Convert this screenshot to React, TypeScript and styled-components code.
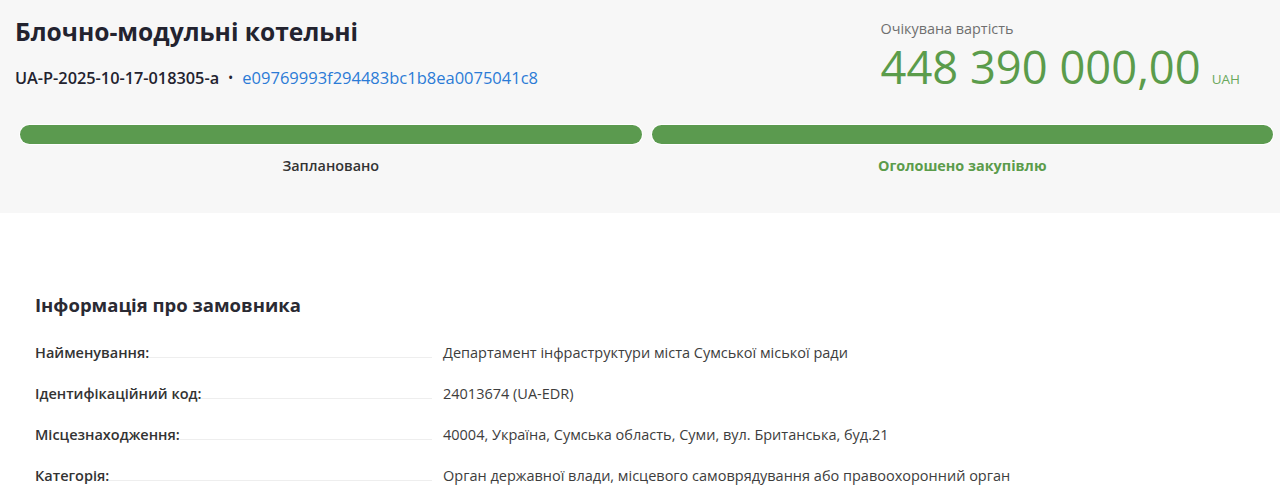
import React from "react";
import styled, { createGlobalStyle } from "styled-components";

const Global = createGlobalStyle`
  html, body { margin: 0; padding: 0; background: #ffffff; }
  body { font-family: "Open Sans", "Noto Sans", sans-serif; color: #333; }
`;

const Header = styled.header`
  background: #f7f7f7;
  padding: 16px 0 37px;
`;

const Top = styled.div`
  display: flex;
  justify-content: space-between;
  align-items: flex-start;
  padding: 0 40px 0 15px;
`;

const Title = styled.h1`
  margin: 0;
  font-size: 24.6px;
  line-height: 32px;
  font-weight: 700;
  color: #23232f;
`;

const IdLine = styled.div`
  margin-top: 18px;
  display: flex;
  align-items: center;
  font-size: 16.5px;
  line-height: 24px;
`;

const TenderId = styled.span`
  font-weight: 600;
  color: #23232f;
  font-size: 16.3px;
`;

const Dot = styled.span`
  margin: 0 9px 0 9px;
  color: #23232f;
  font-size: 14px;
`;

const Hash = styled.a`
  color: #2b7bd6;
  text-decoration: none;
`;

const Cost = styled.div`
  display: flex;
  flex-direction: column;
  padding-top: 3px;
`;

const CostLabel = styled.div`
  font-size: 14.4px;
  line-height: 20px;
  color: #6f6f6f;
`;

const Amount = styled.div`
  display: flex;
  align-items: baseline;
  gap: 11px;
  color: #5b9c4b;
`;

const Sum = styled.span`
  font-size: 45.3px;
  line-height: 56px;
  font-weight: 400;
`;

const Currency = styled.span`
  font-size: 13.5px;
  color: #6aa85c;
`;

const Steps = styled.div`
  display: grid;
  grid-template-columns: 1fr 1fr;
  column-gap: 10px;
  padding: 0 7px 0 20px;
  margin-top: 30px;
`;

const Step = styled.div`
  display: flex;
  flex-direction: column;
  align-items: center;
`;

const Bar = styled.div`
  align-self: stretch;
  height: 19px;
  border-radius: 10px;
  background: #5b9a4f;
  box-shadow: 0 0 0 1px #ffffff;
`;

const StepLabel = styled.div<{ $active?: boolean }>`
  margin-top: 12px;
  font-size: 14.4px;
  line-height: 20px;
  font-weight: ${(p) => (p.$active ? 700 : 600)};
  color: ${(p) => (p.$active ? "#5b9c4b" : "#333333")};
`;

const Section = styled.section`
  padding: 79px 35px 0;
`;

const SectionTitle = styled.h2`
  margin: 0 0 25px;
  font-size: 18.5px;
  line-height: 26px;
  font-weight: 700;
  color: #2a2a33;
`;

const Rows = styled.div`
  display: flex;
  flex-direction: column;
  gap: 21px;
`;

const Row = styled.div`
  display: grid;
  grid-template-columns: 408px 1fr;
  font-size: 14.5px;
  line-height: 20px;
`;

const LabelCell = styled.div`
  display: flex;
  align-items: flex-end;
  padding-right: 11px;
`;

const Label = styled.span`
  font-weight: 600;
  color: #333333;
  white-space: nowrap;
`;

const Leader = styled.span`
  flex: 1;
  height: 1px;
  margin-bottom: 5px;
  background: #eeeeee;
`;

const Value = styled.span`
  color: #3d3d3d;
`;

const rows = [
  ["Найменування:", "Департамент інфраструктури міста Сумської міської ради"],
  ["Ідентифікаційний код:", "24013674 (UA-EDR)"],
  ["Місцезнаходження:", "40004, Україна, Сумська область, Суми, вул. Британська, буд.21"],
  ["Категорія:", "Орган державної влади, місцевого самоврядування або правоохоронний орган"],
];

export default function App() {
  return (
    <>
      <Global />
      <Header>
        <Top>
          <div>
            <Title>Блочно-модульні котельні</Title>
            <IdLine>
              <TenderId>UA-P-2025-10-17-018305-a</TenderId>
              <Dot>•</Dot>
              <Hash href="#">e09769993f294483bc1b8ea0075041c8</Hash>
            </IdLine>
          </div>
          <Cost>
            <CostLabel>Очікувана вартість</CostLabel>
            <Amount>
              <Sum>448 390 000,00</Sum>
              <Currency>UAH</Currency>
            </Amount>
          </Cost>
        </Top>
        <Steps>
          <Step>
            <Bar />
            <StepLabel>Заплановано</StepLabel>
          </Step>
          <Step>
            <Bar />
            <StepLabel $active>Оголошено закупівлю</StepLabel>
          </Step>
        </Steps>
      </Header>
      <Section>
        <SectionTitle>Інформація про замовника</SectionTitle>
        <Rows>
          {rows.map(([l, v]) => (
            <Row key={l}>
              <LabelCell>
                <Label>{l}</Label>
                <Leader />
              </LabelCell>
              <Value>{v}</Value>
            </Row>
          ))}
        </Rows>
      </Section>
    </>
  );
}
